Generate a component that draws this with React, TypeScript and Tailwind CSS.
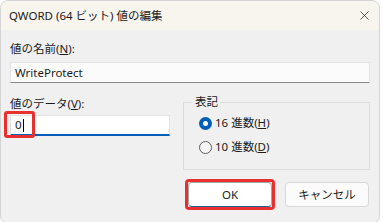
import { X } from "lucide-react";

export default function App() {
  return (
    <div className="h-[222px] w-[383px] overflow-hidden bg-white font-['Noto_Sans','Noto_Sans_CJK_JP',sans-serif] text-[11.5px] text-[#1b1b1b]">
      <div className="h-[224px] w-[380px] overflow-hidden rounded-lg border border-[#d4d4d4] bg-[#f0f0f0]">
        <TitleBar />
        <div className="px-[9px] pt-[11px]">
          <p className="h-[16px] leading-[16px]">
            値の名前(<span className="underline">N</span>):
          </p>
          <div className="mt-[5px] flex h-[21px] items-center border border-[#e3e3e3] border-b-[#8a8a8a] bg-[#fbfbfb] pl-[4px]">
            WriteProtect
          </div>

          <div className="mt-[12px] flex">
            <div className="w-[161px]">
              <p className="h-[16px] pt-[1px] leading-[16px]">
                値のデータ(<span className="underline">V</span>):
              </p>
              <div className="relative mt-[4px] flex h-[21px] items-center border border-[#e3e3e3] border-b-2 border-b-[#005fb8] bg-white pl-[4px]">
                <span>0</span>
                <span className="ml-[1px] h-[13px] w-px bg-black" />
                <span className="absolute -left-[7px] -top-[5px] h-[27px] w-[31px] rounded-[3px] border-[3px] border-[#e8312f]" />
              </div>
            </div>
            <fieldset className="ml-[13px] h-[75px] w-[188px] border border-[#dcdcdc] px-[15px] pb-0 pt-[7px]">
              <legend className="ml-[-6px] px-[2px] leading-[14px]">表記</legend>
              <Radio checked label="16 進数" hotkey="H" />
              <div className="h-[10px]" />
              <Radio label="10 進数" hotkey="D" />
            </fieldset>
          </div>

          <div className="mt-[12px] flex justify-end gap-[13px] pr-[1px]">
            <div className="relative">
              <button className="flex h-[25px] w-[84px] items-center justify-center rounded-[4px] border border-[#9fa6ad] border-b-[#235e9b] bg-white font-normal">
                OK
              </button>
              <span className="absolute -left-[3px] -top-[3px] h-[31px] w-[90px] rounded-[4px] border-[3px] border-[#e8312f]" />
            </div>
            <button className="flex h-[25px] w-[84px] items-center justify-center rounded-[4px] border border-[#d8d8d8] bg-[#fbfbfb] font-normal">
              キャンセル
            </button>
          </div>
        </div>
      </div>
    </div>
  );
}

function TitleBar() {
  return (
    <div className="flex h-[29px] items-center justify-between bg-[#f8f4ee] pl-[8px] pr-[7px]">
      <span>QWORD (64 ビット) 値の編集</span>
      <X size={15} strokeWidth={1.2} className="text-[#222]" />
    </div>
  );
}

function Radio({
  checked = false,
  label,
  hotkey,
}: {
  checked?: boolean;
  label: string;
  hotkey: string;
}) {
  return (
    <div className="flex h-[14px] items-center gap-[3px]">
      {checked ? (
        <span className="flex size-[13px] items-center justify-center rounded-full bg-[#005fb8]">
          <span className="size-[5px] rounded-full bg-white" />
        </span>
      ) : (
        <span className="size-[13px] rounded-full border border-[#5d5d5d] bg-[#f6f6f6]" />
      )}
      <span className="leading-[14px]">
        {label}(<span className="underline">{hotkey}</span>)
      </span>
    </div>
  );
}
